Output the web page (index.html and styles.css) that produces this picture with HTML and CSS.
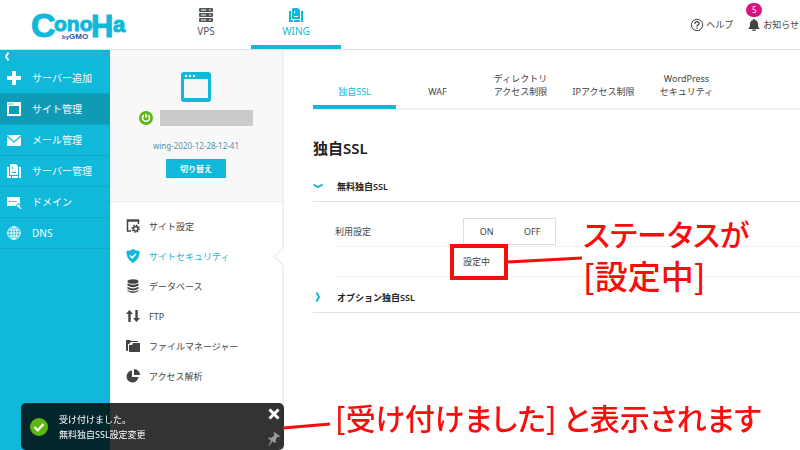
FILE: index.html
```html
<!DOCTYPE html>
<html lang="ja">
<head>
    <meta charset="UTF-8">
    <meta name="viewport" content="width=device-width, initial-scale=1.0">
    <title>独自SSL | ConoHa WING</title>
    <link rel="stylesheet" href="styles.css">
</head>
<body>
    <header class="header">
        <a class="logo" href="#" aria-label="ConoHa by GMO">
            <svg width="96" height="34" viewBox="0 0 96 34">
                <g class="logo-name">
                    <text x="0" y="29" font-size="34">C</text>
                    <text x="23" y="23" font-size="21">ono</text>
                    <text x="60" y="29" font-size="31">H</text>
                    <text x="82" y="24" font-size="22">a</text>
                </g>
                <text class="logo-by" x="31" y="31" font-size="6">by</text>
                <text class="logo-by" x="38" y="31" font-size="8">GMO</text>
            </svg>
        </a>
        <nav class="service-nav">
            <a class="service" href="#">
                <svg width="16" height="16" viewBox="0 0 16 16" fill="currentColor">
                    <rect x="1" y="1" width="14" height="4" rx="1"/>
                    <rect x="1" y="6" width="14" height="4" rx="1"/>
                    <rect x="1" y="11" width="14" height="4" rx="1"/>
                    <path d="M3 3h5M3 8h5M3 13h5M11 3h2M11 8h2M11 13h2" stroke="#fff" stroke-width="1"/>
                </svg>
                VPS
            </a>
            <a class="service active" href="#">
                <svg width="16" height="16" viewBox="0 0 16 16" fill="currentColor">
                    <path d="M5 1h5l2 2v9H4V2z"/>
                    <path d="M1 4h2v9h2v2H1zM13 4h2v11h-2zM6 13h6v2H6z"/>
                    <path d="M6 9.500h4M6.500 4v2" stroke="#fff" fill="none"/>
                </svg>
                WING
            </a>
        </nav>
        <div class="user-nav">
            <a class="user-link" href="#">
                <svg width="14" height="14" viewBox="0 0 14 14" fill="none" stroke="currentColor">
                    <circle cx="7" cy="7" r="5.7"/>
                    <path d="M5 5.7C5 3 9 3 9 5.4 9 7 7 6.800 7 8.500M7 9.500v1.300" stroke-width="1.300"/>
                </svg>
                ヘルプ
            </a>
            <a class="user-link" href="#">
                <span class="bell">
                    <svg width="14" height="14" viewBox="0 0 14 14" fill="currentColor">
                        <path d="M7 1c.8 0 1 .5 1 1 2 .5 3 2 3 4 0 3 .7 4 2 5H1c1.300-1 2-2 2-5 0-2 1-3.500 3-4 0-.5.2-1 1-1zM5 11.500h4a2 1.500 0 0 1-4 0z"/>
                    </svg>
                    <span class="badge">5</span>
                </span>
                お知らせ
            </a>
        </div>
    </header>

    <div class="container">
        <nav class="sidebar">
            <button class="collapse" type="button" aria-label="メニューを閉じる">
                <svg width="6" height="9" viewBox="0 0 6 9" fill="none" stroke="#fff" stroke-width="2"><path d="M4.500 .5L2 4.500l2.500 4"/></svg>
            </button>
            <a class="sidebar-item" href="#">
                <svg width="16" height="16" viewBox="0 0 16 16" fill="#fff"><path d="M6 1h4v5h5v4h-5v5H6v-5H1V6h5z"/></svg>
                サーバー追加
            </a>
            <a class="sidebar-item active" href="#">
                <svg width="16" height="16" viewBox="0 0 16 16" fill="#fff"><path fill-rule="evenodd" d="M1 1h14v14H1zm2 4v8h10V5z"/><path d="M2.500 3h5" stroke="#0f9ab5" stroke-dasharray="1 .5"/></svg>
                サイト管理
            </a>
            <a class="sidebar-item" href="#">
                <svg width="16" height="16" viewBox="0 0 16 16" fill="#fff"><rect x="1" y="3" width="14" height="11" rx="1"/><path d="M1 4l7 6 7-6" fill="none" stroke="#10b8d9" stroke-width="1.200"/></svg>
                メール管理
            </a>
            <a class="sidebar-item" href="#">
                <svg width="16" height="16" viewBox="0 0 16 16" fill="#fff"><path d="M5 1h5l2 2v9H4V2z"/><path d="M1 4h2v9h2v2H1zM13 4h2v11h-2zM6 13h6v2H6z"/><path d="M6 9.500h4M6.500 4v2" stroke="#10b8d9" fill="none"/></svg>
                サーバー管理
            </a>
            <a class="sidebar-item" href="#">
                <svg width="16" height="16" viewBox="0 0 16 16" fill="#fff"><path d="M1 3h13v7l-2-1-2 2 1 1H1z"/><path d="M11 10l4 1.500-1.500.5 2 2.500-1 .8-2-2.300-.8 1z"/><path d="M3 7.500h8" stroke="#10b8d9" stroke-dasharray="2 .8"/></svg>
                ドメイン
            </a>
            <a class="sidebar-item" href="#">
                <svg width="16" height="16" viewBox="0 0 16 16" fill="none" stroke="#fff"><circle cx="8" cy="8" r="6.300"/><ellipse cx="8" cy="8" rx="3" ry="6.300"/><path d="M8 2v12M2 8h12M3 5h10M3 11h10"/></svg>
                DNS
            </a>
        </nav>

        <aside class="site-panel">
            <div class="account">
                <svg class="account-icon" width="30" height="30" viewBox="0 0 30 30">
                    <path fill="#10b8d9" fill-rule="evenodd" d="M3 0h24a3 3 0 0 1 3 3v24a3 3 0 0 1-3 3H3a3 3 0 0 1-3-3V3a3 3 0 0 1 3-3zm0 7v19h24V7z"/>
                    <g fill="#fff"><circle cx="5" cy="4" r="1.200"/><circle cx="9" cy="4" r="1.200"/><circle cx="13" cy="4" r="1.200"/></g>
                </svg>
                <div class="account-name">
                    <svg width="14" height="14" viewBox="0 0 14 14" fill="none" stroke="#fff" stroke-width="1.600"><circle cx="7" cy="7" r="7" fill="#5cb811" stroke="none"/><path d="M4.800 4.200a3.500 3.500 0 1 0 4.400 0M7 2.800v4"/></svg>
                    <span class="masked"></span>
                </div>
                <div class="account-id">wing-2020-12-28-12-41</div>
                <button class="switch-btn" type="button">切り替え</button>
            </div>
            <nav class="site-menu">
                <a class="menu-item" href="#">
                    <svg width="14" height="14" viewBox="0 0 14 14" fill="none" stroke="currentColor" stroke-width="1.500"><path d="M5 12H1.500V1h11v4"/><path d="M1 2h12"/><circle cx="9.700" cy="9.700" r="2.300"/><circle cx="9.700" cy="9.700" r="3.500" stroke-dasharray="1.400 1.350"/></svg>
                    サイト設定
                </a>
                <a class="menu-item active" href="#">
                    <svg width="14" height="14" viewBox="0 0 14 14"><path fill="currentColor" d="M7 0q3 2 6.500 2 .5 8-6.500 12Q0 10 .5 2 4 2 7 0z"/><path d="M4 6.500l2.200 2.300L10 4.800" fill="none" stroke="#fff" stroke-width="1.500"/></svg>
                    サイトセキュリティ
                </a>
                <a class="menu-item" href="#">
                    <svg width="14" height="14" viewBox="0 0 14 14" fill="currentColor"><ellipse cx="7" cy="2.500" rx="5.500" ry="2.300"/><path d="M1.500 4.200q5.500 3 11 0v2.300q-5.500 3.500-11 0zM1.500 7.800q5.500 3.200 11 0v2q-5.500 3.500-11 0zM1.500 11q5.500 3.200 11 0v1q-5.500 4-11 0z"/></svg>
                    データベース
                </a>
                <a class="menu-item" href="#">
                    <svg width="14" height="14" viewBox="0 0 14 14" fill="currentColor"><path d="M3.500 1L7 5H4.700v8H2.300V5H0zM10.500 13L7 9h2.300V1h2.400v8H14z"/></svg>
                    FTP
                </a>
                <a class="menu-item" href="#">
                    <svg width="14" height="14" viewBox="0 0 14 14" fill="currentColor"><path d="M0 1h4l1 1h7v1H5L3 5H2v7H1L0 11z"/><path d="M3 6h3l1-2h7v9H3z"/></svg>
                    ファイルマネージャー
                </a>
                <a class="menu-item" href="#">
                    <svg width="14" height="14" viewBox="0 0 14 14" fill="currentColor"><path d="M6 1.500V8h6.500A6 6 0 1 1 6 1.500z"/><path d="M8 0a6 6 0 0 1 6 6H8z"/></svg>
                    アクセス解析
                </a>
            </nav>
        </aside>

        <main class="main-content">
            <nav class="tabs">
                <a class="tab active" href="#">独自SSL</a>
                <a class="tab" href="#">WAF</a>
                <a class="tab" href="#">ディレクトリ<br>アクセス制限</a>
                <a class="tab" href="#">IPアクセス制限</a>
                <a class="tab" href="#">WordPress<br>セキュリティ</a>
            </nav>
            <h1>独自SSL</h1>
            <section>
                <h2 class="accordion">
                    <svg width="10" height="10" viewBox="0 0 10 10" fill="none" stroke="#10b8d9" stroke-width="2"><path d="M.5 3.500L5 6l4.500-2.500"/></svg>
                    無料独自SSL
                </h2>
                <div class="settings">
                    <div class="setting-row">
                        <span class="setting-label" id="useLabel">利用設定</span>
                        <div class="toggle" role="group" aria-labelledby="useLabel">
                            <button type="button">ON</button>
                            <button type="button">OFF</button>
                        </div>
                    </div>
                    <div class="setting-row">
                        <span class="setting-label"></span>
                        <div class="status">
                            設定中
                            <span class="marker"></span>
                            <svg class="marker-line" width="76" height="8" viewBox="0 0 76 8"><path d="M0 6L75 2" stroke="#f80d0d" stroke-width="3"/></svg>
                            <div class="note note-status">
                                <div>ステータスが</div>
                                <div class="note-large">[設定中]</div>
                            </div>
                        </div>
                    </div>
                </div>
            </section>
            <section>
                <h2 class="accordion">
                    <svg width="10" height="10" viewBox="0 0 10 10" fill="none" stroke="#10b8d9" stroke-width="2"><path d="M3.500 .5L6 5 3.500 9.500"/></svg>
                    オプション独自SSL
                </h2>
            </section>
        </main>
    </div>

    <div class="toast" role="status">
        <svg width="18" height="18" viewBox="0 0 18 18"><circle cx="9" cy="9" r="9" fill="#5cb811"/><path d="M4.500 9l3.200 3.300L13.500 6" fill="none" stroke="#fff" stroke-width="2.400"/></svg>
        <p>受け付けました。<br>無料独自SSL設定変更</p>
        <div class="toast-actions">
            <button type="button" aria-label="閉じる"><svg width="12" height="12" viewBox="0 0 12 12" stroke="#fff" stroke-width="3"><path d="M1.500 1.500l9 9M10.500 1.500l-9 9"/></svg></button>
            <button type="button" aria-label="固定"><svg width="12" height="14" viewBox="0 0 12 14" fill="#999"><path d="M6 0l6 4-1 1-1.500-.3L7.500 8l.5 2-1 1-2.500-1.800L1 14l-.5-.3 2.500-5.500L0 6.500l1-1 2.500.2L6.500 3 5.500 1z"/></svg></button>
        </div>
        <svg class="toast-line" width="48" height="8" viewBox="0 0 48 8"><path d="M0 6L47 2" stroke="#f80d0d" stroke-width="3"/></svg>
        <span class="note note-toast">[受け付けました] と表示されます</span>
    </div>
</body>
</html>
```
FILE: styles.css
```css
* {
    box-sizing: border-box;
}
body {
    margin: 0;
    min-height: 100vh;
    display: flex;
    flex-direction: column;
    background-color: #fff;
    color: #444;
    font-family: "Noto Sans", "Noto Sans CJK JP", sans-serif;
    font-size: 9px;
    line-height: 15px;
}
a {
    color: inherit;
    text-decoration: none;
}
button {
    padding: 0;
    border: none;
    background: none;
    color: inherit;
    font: inherit;
    cursor: pointer;
}
svg {
    display: block;
    flex-shrink: 0;
    overflow: visible;
}

/* header */
.header {
    display: flex;
    height: 50px;
    border-bottom: 1px solid #e2e2e2;
}
.logo {
    width: 161px;
    padding: 8px 0 0 31px;
}
.logo-name {
    fill: #10b8d9;
    stroke: #10b8d9;
    stroke-width: 1;
    font-family: "Liberation Sans", Arial, sans-serif;
    font-weight: bold;
}
.logo-by {
    fill: #1b55a5;
    font-family: "Liberation Sans", Arial, sans-serif;
    font-weight: bold;
}
.service-nav {
    display: flex;
}
.service {
    display: flex;
    flex-direction: column;
    align-items: center;
    width: 90px;
    height: 49px;
    padding-top: 7px;
    color: #505658;
    font-size: 10px;
    line-height: 17px;
}
.service.active {
    color: #10b8d9;
    border-bottom: 4px solid #10b8d9;
}
.user-nav {
    display: flex;
    gap: 14px;
    margin-left: auto;
    padding-right: 1px;
}
.user-link {
    display: flex;
    align-items: center;
    gap: 2px;
    white-space: nowrap;
}
.bell {
    position: relative;
}
.badge {
    position: absolute;
    left: -1px;
    top: -15px;
    width: 16px;
    height: 14px;
    border-radius: 7px;
    background-color: #d9127d;
    color: #fff;
    font-size: 8px;
    line-height: 14px;
    text-align: center;
}

/* left menu */
.container {
    display: flex;
    flex: 1;
}
.sidebar {
    width: 110px;
    background-color: #10b8d9;
    color: #fff;
}
.collapse {
    display: flex;
    align-items: center;
    width: 100%;
    height: 13px;
    padding-left: 4px;
}
.sidebar-item {
    display: flex;
    align-items: center;
    gap: 10px;
    height: 31px;
    padding-left: 6px;
    border-bottom: 1px solid #0fa9c8;
    font-size: 10px;
}
.sidebar-item.active {
    background-color: #0f9ab5;
}

/* site panel */
.site-panel {
    width: 174px;
    border-right: 2px solid #f0f0f0;
}
.account {
    display: flex;
    flex-direction: column;
    align-items: center;
    height: 152px;
    padding-top: 22px;
    border-bottom: 1px solid #eee;
    background-color: #f8f8f8;
}
.account-name {
    display: flex;
    align-items: center;
    gap: 7px;
    margin-top: 8px;
}
.masked {
    width: 93px;
    height: 16px;
    background-color: #cbcbcb;
}
.account-id {
    margin: 12px 0 6px;
    color: #4a93ab;
    font-size: 8px;
}
.switch-btn {
    width: 60px;
    height: 19px;
    background-color: #10b8d9;
    color: #fff;
    font-size: 8px;
    font-weight: bold;
}
.site-menu {
    padding-top: 9px;
}
.menu-item {
    display: flex;
    align-items: center;
    gap: 9px;
    height: 30px;
    padding-left: 16px;
    position: relative;
}
.menu-item.active {
    color: #10b8d9;
}
.menu-item.active::after {
    content: "";
    position: absolute;
    right: -7px;
    width: 11px;
    height: 11px;
    border-left: 2px solid #f0f0f0;
    border-bottom: 2px solid #f0f0f0;
    background-color: #fff;
    transform: rotate(45deg);
}

/* main */
.main-content {
    flex: 1;
    padding: 16px 0 0 29px;
}
.tabs {
    display: flex;
    height: 44px;
    border-bottom: 2px solid #f0f0f0;
}
.tab {
    display: flex;
    align-items: flex-end;
    justify-content: center;
    width: 83px;
    margin-bottom: -1px;
    padding-bottom: 11px;
    line-height: 13px;
    text-align: center;
    white-space: nowrap;
}
.tab.active {
    padding-bottom: 7px;
    border-bottom: 4px solid #10b8d9;
    color: #10b8d9;
}
h1 {
    margin: 28px 0 18px;
    color: #222;
    font-size: 15px;
    font-weight: 600;
    line-height: 20px;
}
.accordion {
    display: flex;
    align-items: center;
    gap: 14px;
    height: 26px;
    margin: 0;
    padding-bottom: 5px;
    border-bottom: 1px solid #e2e2e2;
    color: #222;
    font-size: 9px;
    font-weight: 600;
}
.settings {
    padding: 15px 0 10px 22px;
}
.setting-row {
    display: flex;
    align-items: center;
    height: 30px;
    border-bottom: 1px dotted #e6e6e6;
}
.setting-label {
    width: 128px;
}
.toggle {
    display: flex;
    width: 93px;
    height: 27px;
    border: 1px solid #ddd;
}
.toggle button {
    flex: 1;
}
.status {
    position: relative;
}

/* red notes over the page */
.marker {
    position: absolute;
    left: -13px;
    top: -10px;
    width: 58px;
    height: 36px;
    border: 4px solid #f80d0d;
}
.marker-line {
    position: absolute;
    left: 44px;
    top: 2px;
}
.note {
    position: absolute;
    color: #f80d0d;
    font-family: "Noto Sans CJK JP", sans-serif;
    font-feature-settings: "palt";
    font-size: 30px;
    font-weight: 500;
    line-height: 42px;
    white-space: nowrap;
}
.note-status {
    left: 120px;
    top: -42px;
}
.note-large {
    font-size: 33px;
}
.note-toast {
    left: 314px;
    top: -7px;
}

/* toast */
.toast {
    position: fixed;
    left: 21px;
    bottom: 0;
    display: flex;
    align-items: center;
    gap: 11px;
    width: 263px;
    height: 47px;
    padding: 1px 4px 0 9px;
    border-radius: 5px;
    background-color: rgba(0, 0, 0, 0.8);
    color: #fff;
}
.toast p {
    flex: 1;
    margin: 0;
}
.toast-actions {
    display: flex;
    flex-direction: column;
    gap: 12px;
}
.toast-line {
    position: absolute;
    left: 262px;
    top: 19px;
}
```
